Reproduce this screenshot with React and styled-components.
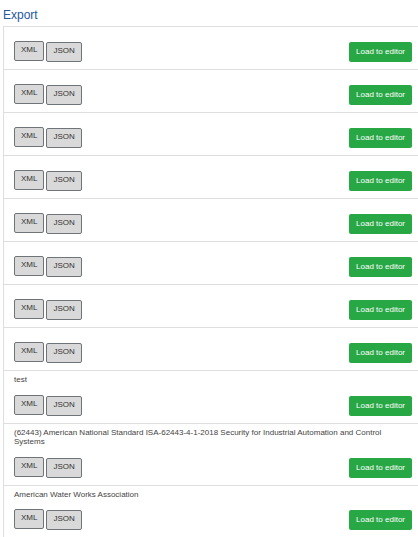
import styled, {createGlobalStyle} from "styled-components"

const exportsData = [
    {title: ""},
    {title: ""},
    {title: ""},
    {title: ""},
    {title: ""},
    {title: ""},
    {title: ""},
    {title: ""},
    {title: "test"},
    {title: "(62443) American National Standard ISA-62443-4-1-2018 Security for Industrial Automation and Control Systems"},
    {title: "American Water Works Association"},
]

const App = () => {
    return (
        <>
            <GlobalStyle />
            <Page>
                <Header>Export</Header>
                <ExportList>
                    {exportsData.map((item, index) => (
                        <ExportRow key={index}>
                            <RowTitle>{item.title}</RowTitle>
                            <Actions>
                                <FormatGroup>
                                    <FormatButton>XML</FormatButton>
                                    <FormatButton $lower>JSON</FormatButton>
                                </FormatGroup>
                                <LoadButton>Load to editor</LoadButton>
                            </Actions>
                        </ExportRow>
                    ))}
                </ExportList>
            </Page>
        </>
    )
}

export default App

const GlobalStyle = createGlobalStyle`
html, body {
    margin: 0;
    overflow: hidden;
    background: #fff;
}
body {
    font-family: "Liberation Sans", Arial, sans-serif;
}
`
const Page = styled.div`
padding: 0 0 0 3px;
`
const Header = styled.div`
padding-top: 8px;
margin-bottom: 4px;
font-size: 12px;
line-height: 14px;
color: #25589c;
`
const ExportList = styled.div`
box-sizing: border-box;
width: 420px;
border: 1px solid #dedede;
border-bottom: none;
`
const ExportRow = styled.div`
padding: 4px 10px 7px;
border-bottom: 1px solid #dedede;
`
const RowTitle = styled.div`
font-size: 8px;
line-height: 9.5px;
color: #444;
margin-bottom: 10px;
`
const Actions = styled.div`
display: flex;
justify-content: space-between;
align-items: flex-start;
`
const FormatGroup = styled.div`
display: flex;
align-items: flex-start;
gap: 2px;
`
const FormatButton = styled.button`
box-sizing: border-box;
margin: ${p => (p.$lower ? "1px 0 0" : "0")};
padding: 3px 6px 5px;
font-family: "Liberation Sans", Arial, sans-serif;
font-size: 8px;
line-height: 10px;
color: #333;
background-color: #d9d9d9;
border: 1px solid #6f7479;
border-radius: 2px;
`
const LoadButton = styled.button`
box-sizing: border-box;
margin-top: 1px;
height: 20px;
padding: 0 7px;
font-family: "Liberation Sans", Arial, sans-serif;
font-size: 8px;
line-height: 20px;
color: #fff;
background-color: #28a745;
border: none;
border-radius: 2px;
`
